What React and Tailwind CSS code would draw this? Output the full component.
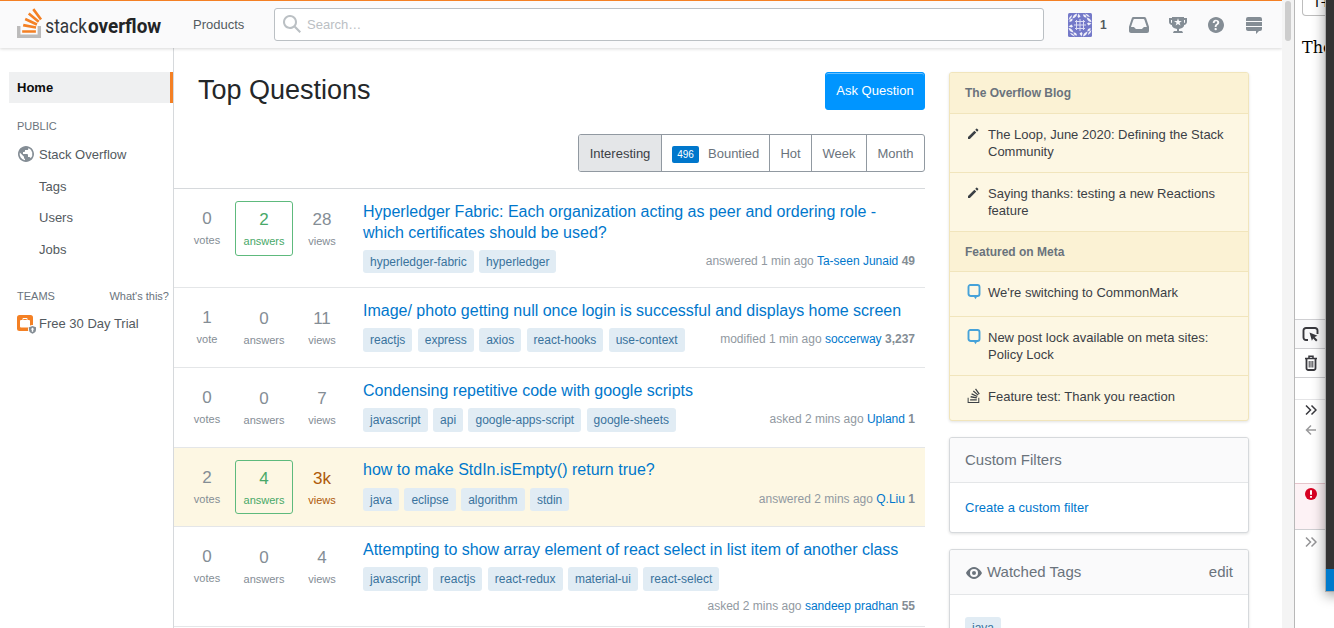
import React from 'react';

const questions = [
  {
    votes: '0', votesLabel: 'votes', answers: '2', accepted: true, views: '28',
    title: ['Hyperledger Fabric: Each organization acting as peer and ordering role -', 'which certificates should be used?'],
    tags: ['hyperledger-fabric', 'hyperledger'],
    action: 'answered 1 min ago', user: 'Ta-seen Junaid', rep: '49', height: 'h-[99px]', box: 'h-[55px]', tagHeight: 'h-[23px]',
  },
  {
    votes: '1', votesLabel: 'vote', answers: '0', views: '11',
    title: ['Image/ photo getting null once login is successful and displays home screen'],
    tags: ['reactjs', 'express', 'axios', 'react-hooks', 'use-context'],
    action: 'modified 1 min ago', user: 'soccerway', rep: '3,237', height: 'h-[80px]', box: 'h-[55px]', tagHeight: 'h-6',
  },
  {
    votes: '0', votesLabel: 'votes', answers: '0', views: '7',
    title: ['Condensing repetitive code with google scripts'],
    tags: ['javascript', 'api', 'google-apps-script', 'google-sheets'],
    action: 'asked 2 mins ago', user: 'Upland', rep: '1', height: 'h-[80px]', box: 'h-[55px]', tagHeight: 'h-6',
  },
  {
    votes: '2', votesLabel: 'votes', answers: '4', accepted: true, views: '3k', hot: true, highlight: true,
    title: ['how to make StdIn.isEmpty() return true?'],
    tags: ['java', 'eclipse', 'algorithm', 'stdin'],
    action: 'answered 2 mins ago', user: 'Q.Liu', rep: '1', height: 'h-[79px]', box: 'h-[54px]', tagHeight: 'h-[23px]',
  },
  {
    votes: '0', votesLabel: 'votes', answers: '0', views: '4', wrap: true,
    title: ['Attempting to show array element of react select in list item of another class'],
    tags: ['javascript', 'reactjs', 'react-redux', 'material-ui', 'react-select'],
    action: 'asked 2 mins ago', user: 'sandeep pradhan', rep: '55', height: 'h-[100px]', box: 'h-[55px]', tagHeight: 'h-6',
  },
];

function Icon({ w = 18, h = 18, className = '', d }) {
  return (
    <svg width={w} height={h} viewBox={`0 0 ${w} ${h}`} className={`shrink-0 ${className}`} fill="currentColor">
      <path d={d} />
    </svg>
  );
}

const GLYPH_BASE = 'M14 16v-5h2v7H2v-7h2v5h10z';
const GLYPH_BARS =
  'M12.09.72l-1.21.9 4.5 6.07 1.22-.9L12.09.71zM5 15h8v-1.5H5V15zm9.15-5.87L8.35 4.3l.96-1.16 5.8 4.83-.96 1.16zm-7.7-1.47l6.85 3.19.63-1.37-6.85-3.2-.63 1.38zm6.53 5L5.4 11.39l.38-1.67 7.42 1.48-.22 1.46z';

function Logo() {
  return (
    <svg width="152" height="37" viewBox="0 0 152 37" className="ml-[13px] shrink-0">
      <g transform="translate(.6 1.1) scale(1.714)">
        <path d={GLYPH_BASE} fill="#BCBBBB" />
        <path d={GLYPH_BARS} fill="#F48024" />
      </g>
      <text transform="translate(32.3 26.5) scale(.86 1)" fill="#33363a" className="font-[Roboto,sans-serif] text-[20px]">stack</text>
      <text transform="translate(75 26.5) scale(.945 1)" fill="#222426" className="font-[Roboto,sans-serif] text-[20px] font-bold">overflow</text>
    </svg>
  );
}

function Avatar() {
  const quarter = (
    <>
      <path d="M.5 7Q1 3.500 4 2Q4 5 .5 7Z" />
      <path d="M4.500 5.500Q5 1.500 9 .5Q9 4 4.500 5.500Z" />
      <path d="M10.500 .5L12.500 3.500L10.500 5L9.500 3.500Z" />
      <path d="M15 1.500Q18 1 18.500 4.500Q15.500 5 15 1.500Z" />
    </>
  );
  return (
    <svg width="24" height="24" viewBox="0 0 24 24" className="shrink-0">
      <rect width="24" height="24" rx="1.500" fill="#7479c9" />
      <g fill="#f1f1fa">
        <g>{quarter}</g>
        <g transform="rotate(90 12 12)">{quarter}</g>
        <g transform="rotate(180 12 12)">{quarter}</g>
        <g transform="rotate(270 12 12)">{quarter}</g>
      </g>
      <circle cx="12" cy="12" r="6.600" fill="#7479c9" />
      <path d="M7 8.500h10M6 12h12M7 15.500h10M8.500 7v10M12 6v12M15.500 7v10" stroke="#dcdcf3" strokeWidth="1" />
    </svg>
  );
}

function Header() {
  return (
    <header className="relative z-10 flex h-12 w-full shrink-0 items-center border-t border-[#f48024] bg-[#fafafb] shadow-[0_1px_3px_rgba(12,13,14,0.16)]">
      <Logo />
      <span className="ml-[28px] w-[81px] text-[13px] text-[#535a60]">Products</span>
      <div className="flex h-[33px] w-[770px] items-center rounded-[3px] border border-[#bbc0c4] bg-white pl-2">
        <Icon className="-mt-px text-[#bbc0c4]" d="M18 16.5l-5.14-5.18h-.35a7 7 0 10-1.19 1.19v.35L16.5 18l1.5-1.5zM12 7A5 5 0 112 7a5 5 0 0110 0z" />
        <span className="ml-[6px] text-[13px] text-[#bbc0c4]">Search…</span>
      </div>
      <div className="flex items-center pl-6 text-[#848d95]">
        <Avatar />
        <span className="ml-2 w-[29px] text-[12px] font-bold text-[#535a60]">1</span>
        <Icon w={20} className="mt-px" d="M15.19 1H4.63c-.85 0-1.6.54-1.85 1.35L0 10.79V15c0 1.1.9 2 2 2h16a2 2 0 002-2v-4.21l-2.87-8.44A2 2 0 0015.19 1zm-.28 10l-2 2h-6l-2-2H1.96L4.4 3.68A1 1 0 015.35 3h9.12a1 1 0 01.95.68L17.86 11h-2.95z" />
        <Icon className="ml-5 mt-px" d="M15 2V1H3v1H0v4c0 1.6 1.4 3 3 3v1c.4 1.5 3 2.6 5 3v2H5s-1 1.5-1 2h10c0-.4-1-2-1-2h-3v-2c2-.4 4.6-1.5 5-3V9c1.6-.2 3-1.4 3-3V2h-3zM3 7c-.5 0-1-.5-1-1V4h1v3zm8.4 2.5L9 8 6.6 9.4l1-2.7L5 5h3l1-2.7L10 5h2.8l-2.3 1.8 1 2.7h-.1zM16 6c0 .5-.5 1-1 1V4h1v2z" />
        <Icon className="ml-5 mt-px" d="M9 1C4.64 1 1 4.64 1 9c0 4.36 3.64 8 8 8 4.36 0 8-3.64 8-8 0-4.36-3.64-8-8-8zm.81 12.13c-.02.71-.55 1.15-1.24 1.13-.66-.02-1.17-.49-1.15-1.2.02-.72.56-1.18 1.22-1.16.7.03 1.2.51 1.17 1.23zM11.77 8c-.59.66-1.78 1.09-2.05 1.97a4 4 0 00-.09.75c0 .05-.03.16-.18.16H7.88c-.16 0-.18-.1-.18-.15.06-1.35.66-2.2 1.83-2.88.39-.29.7-.75.7-1.24.01-1.24-1.64-1.82-2.35-.72-.21.33-.18.73-.18 1.1H5.75c0-1.97 1.03-3.26 3.03-3.26 1.75 0 3.47.87 3.47 2.83 0 .57-.2 1.05-.48 1.44z" />
        <Icon className="ml-5 mt-px" d="M15 1H3a2 2 0 00-2 2v2h16V3a2 2 0 00-2-2zM1 13c0 1.1.9 2 2 2h8v3l3-3h1a2 2 0 002-2v-2H1v2zm16-7H1v4h16V6z" />
      </div>
    </header>
  );
}

function Sidebar() {
  return (
    <nav className="w-[174px] shrink-0 border-r border-[#d6d9dc] pl-[9px] pt-6 text-[13px] text-[#535a60]">
      <div className="flex h-[31px] items-center border-r-[3px] border-[#f48024] bg-[#eff0f1] pl-2 font-bold text-[#0c0d0e]">Home</div>
      <div className="pl-2">
        <div className="mt-[15px] h-4 text-[11px] leading-4 text-[#6a737c]">PUBLIC</div>
        <div className="mt-[11px] flex h-5 items-center">
          <Icon className="-mt-[2px] text-[#848d95]" d="M9 1C4.64 1 1 4.64 1 9c0 4.36 3.64 8 8 8 4.36 0 8-3.64 8-8 0-4.36-3.64-8-8-8zM8 15.32a6.46 6.46 0 01-4.3-2.74 6.46 6.46 0 01-.93-5.01L7 11.68v.8c0 .88.12 1.32 1 1.32v1.52zm5.72-2c-.2-.66-1-1.32-1.72-1.32h-1v-2c0-.44-.56-1-1-1H6V7h1c.44 0 1-.56 1-1V5h2c.88 0 1.4-.72 1.4-1.6v-.33a6.45 6.45 0 013.83 4.51 6.45 6.45 0 01-1.51 5.73v.01z" />
          <span className="ml-1">Stack Overflow</span>
        </div>
        <div className="mt-3 h-5 pl-[22px] leading-5">Tags</div>
        <div className="mt-[11px] h-5 pl-[22px] leading-5">Users</div>
        <div className="mt-3 h-5 pl-[22px] leading-5">Jobs</div>
        <div className="mt-[28px] flex h-4 justify-between pr-1 text-[11px] leading-4 text-[#6a737c]">
          <span>TEAMS</span>
          <span>What's this?</span>
        </div>
        <div className="mt-[10px] flex h-5 items-center">
          <svg width="20" height="20" viewBox="0 0 20 20" className="shrink-0">
            <rect x="0" y="1" width="16" height="16" rx="2.5" fill="#F48024" />
            <path d="M3 7a1 1 0 011-1h1.5V5a1 1 0 011-1h3a1 1 0 011 1v1H12a1 1 0 011 1v5.5a1 1 0 01-1 1H4a1 1 0 01-1-1z" fill="#fff" />
            <path d="M6.3 5h3.4v1H6.3z" fill="#F48024" />
            <circle cx="15.5" cy="15.5" r="4.5" fill="#fff" />
            <path d="M12 13.2l3.5-1.2 3.5 1.2v2.600c0 2.200-1.500 3.200-3.500 4-2-.8-3.500-1.800-3.500-4z" fill="#848d95" />
            <path d="M15.500 13.500l1.800 2h-1.100v2.300h-1.400v-2.300h-1.100z" fill="#fff" />
          </svg>
          <span className="ml-[2px]">Free 30 Day Trial</span>
        </div>
      </div>
    </nav>
  );
}

function Tag({ children, height = 'h-6' }) {
  return <span className={`rounded-[3px] bg-[#e1ecf4] px-[7px] text-[12px] leading-6 text-[#39739d] ${height}`}>{children}</span>;
}

function Stat({ value, label, className }) {
  return (
    <div className={`flex shrink-0 flex-col items-center ${className}`}>
      <span className="text-[17px] leading-5">{value}</span>
      <span className="mt-1 text-[11px] leading-[14px]">{label}</span>
    </div>
  );
}

function Question({ q }) {
  const meta = (
    <div className={`ml-auto shrink-0 text-[12px] leading-[15px] text-[#9199a1] ${q.wrap ? 'mt-2' : 'mt-1'}`}>
      {q.action} <span className="text-[#0077cc]">{q.user}</span> <b className="text-[#848d95]">{q.rep}</b>
    </div>
  );
  return (
    <div className={`flex shrink-0 border-b border-[#e4e6e8] pt-3 pr-[10px] text-[#848d95] ${q.height} ${q.highlight ? 'bg-[#fdf7e3]' : ''}`}>
      <Stat value={q.votes} label={q.votesLabel} className="ml-[14px] w-[38px] pt-2" />
      <Stat
        value={q.answers}
        label="answers"
        className={`ml-[9px] w-[58px] rounded-[3px] border pt-2 ${q.box} ${q.accepted ? 'border-[#5eba7d] text-[#48a868]' : 'border-transparent'}`}
      />
      <Stat value={q.views} label="views" className={`ml-[10px] w-[38px] pt-[9px] ${q.hot ? 'text-[#ae5a0a]' : ''}`} />
      <div className={`ml-[22px] min-w-0 flex-1 ${q.highlight ? '-mt-px' : ''}`}>
        <h3 className="text-[16px] leading-[21px] text-[#0077cc]">
          {q.title.map((line) => (
            <div key={line} className="whitespace-nowrap">{line}</div>
          ))}
        </h3>
        <div className={`flex gap-[5.4px] ${q.highlight ? 'mt-2' : 'mt-[7px]'} ${q.wrap ? 'flex-wrap gap-y-0' : ''}`}>
          {q.tags.map((t) => (
            <Tag key={t} height={q.tagHeight}>{t}</Tag>
          ))}
          {q.wrap ? <div className="flex w-full">{meta}</div> : meta}
        </div>
      </div>
    </div>
  );
}

function Main() {
  return (
    <main className="flex w-[751px] shrink-0 flex-col">
      <div className="flex h-[86px] shrink-0 justify-between pl-6 pt-6">
        <h1 className="pt-px text-[27px] leading-[35px] text-[#242729]">Top Questions</h1>
        <button className="h-[38px] w-[100px] rounded-[3px] border border-[#0095ff] bg-[#0095ff] text-[13px] text-white shadow-[inset_0_1px_0_rgba(255,255,255,0.4)]">Ask Question</button>
      </div>
      <div className="flex h-[55px] shrink-0 justify-end border-b border-[#d6d9dc] text-[13px] text-[#6a737c]">
        <div className="flex h-[38px] divide-x divide-[#9199a1] overflow-hidden rounded-[3px] border border-[#9199a1]">
          <span className="flex w-[83px] items-center justify-center bg-[#e4e6e8] pt-[2px] text-[#3b4045]">Interesting</span>
          <span className="flex w-[108px] items-center pl-[10px] pt-[2px]">
            <span className="mt-px mr-[9px] flex h-[17px] w-[27px] items-center justify-center rounded-[2px] bg-[#0077cc] text-[10px] text-white">496</span>
            Bountied
          </span>
          <span className="flex w-[42px] items-center justify-center pt-[2px]">Hot</span>
          <span className="flex w-[55px] items-center justify-center pt-[2px]">Week</span>
          <span className="flex w-[57px] items-center justify-center pt-[2px]">Month</span>
        </div>
      </div>
      {questions.map((q) => (
        <Question key={q.title[0]} q={q} />
      ))}
    </main>
  );
}

function Pencil() {
  return <Icon w={14} h={14} className="-ml-px mt-px text-[#3b4045]" d="M11.1 1.71l1.13 1.12c.2.2.2.51 0 .71L11.1 4.7 9.21 2.86l1.17-1.15c.2-.2.51-.2.71 0h.01zM2 10.12l6.37-6.43 1.88 1.88L3.88 12H2v-1.88z" />;
}

function Bubble() {
  return (
    <svg width="14" height="16" viewBox="0 0 14 16" className="shrink-0">
      <path d="M4 1h6.500a2 2 0 012 2v7a2 2 0 01-2 2H4a2.500 2.500 0 01-2.500-2V3a2 2 0 012.500-2z" fill="none" stroke="#46A2D9" strokeWidth="1.900" />
      <path d="M6.500 12h4L8.500 15.300z" fill="#46A2D9" />
    </svg>
  );
}

function Glyph() {
  return (
    <svg width="15" height="15" viewBox="1.500 0 17.500 18" className="shrink-0" fill="#3b4045">
      <path d="M14.800 16.800v-5h1.200v6.200H2v-6.200h1.200v5z" />
      <path d={GLYPH_BARS} />
    </svg>
  );
}

function BlogItem({ icon, children, className }) {
  return (
    <div className={`flex shrink-0 border-b border-[#f1e5bc] pl-[17px] pt-3 text-[13px] leading-[17px] text-[#3b4045] last:border-b-0 ${className}`}>
      <span className="w-[21px] shrink-0">{icon}</span>
      <span className="w-[250px]">{children}</span>
    </div>
  );
}

function Aside() {
  return (
    <aside className="ml-6 flex w-[300px] shrink-0 flex-col gap-4 pt-6">
      <section className="flex h-[349px] shrink-0 flex-col overflow-hidden rounded-[3px] border border-[#f1e5bc] bg-[#fdf7e3] shadow-[0_1px_3px_rgba(12,13,14,0.12)]">
        <div className="flex h-[41px] shrink-0 items-center border-b border-[#f1e5bc] bg-[#fbf2d4] pl-[15px] text-[12px] font-bold text-[#6a737c]">The Overflow Blog</div>
        <BlogItem icon={<Pencil />} className="h-[59px]">The Loop, June 2020: Defining the Stack Community</BlogItem>
        <BlogItem icon={<Pencil />} className="h-[59px]">Saying thanks: testing a new Reactions feature</BlogItem>
        <div className="flex h-10 shrink-0 items-center border-b border-[#f1e5bc] bg-[#fbf2d4] pl-[15px] text-[12px] font-bold text-[#6a737c]">Featured on Meta</div>
        <BlogItem icon={<Bubble />} className="h-[45px]">We're switching to CommonMark</BlogItem>
        <BlogItem icon={<Bubble />} className="h-[59px]">New post lock available on meta sites: Policy Lock</BlogItem>
        <BlogItem icon={<Glyph />} className="h-[44px]">Feature test: Thank you reaction</BlogItem>
      </section>
      <section className="h-[96px] shrink-0 overflow-hidden rounded-[3px] border border-[#d6d9dc] bg-white shadow-[0_1px_3px_rgba(12,13,14,0.12)]">
        <div className="flex h-[45px] items-center border-b border-[#e4e6e8] bg-[#fafafb] pl-[15px] text-[15px] text-[#6a737c]">Custom Filters</div>
        <div className="flex h-[49px] items-center pl-[15px] text-[13px] text-[#0077cc]">Create a custom filter</div>
      </section>
      <section className="h-[140px] shrink-0 overflow-hidden rounded-[3px] border border-[#d6d9dc] bg-white shadow-[0_1px_3px_rgba(12,13,14,0.12)]">
        <div className="flex h-[45px] items-center border-b border-[#e4e6e8] bg-[#fafafb] px-[15px] text-[15px] text-[#6a737c]">
          <Icon className="mt-[2px]" d="M9.06 3C4 3 1 9 1 9s3 6 8.060 6C14 15 17 9 17 9s-3-6-7.940-6zM9 13a4 4 0 110-8 4 4 0 010 8zm0-2a2 2 0 002-2 2 2 0 00-2-2 2 2 0 00-2 2 2 2 0 002 2z" />
          <span className="ml-1 flex-1">Watched Tags</span>
          <span>edit</span>
        </div>
        <div className="flex pl-[15px] pt-[22px]">
          <span className="h-6 rounded-[3px] bg-[#e1ecf4] px-[7px] text-[12px] leading-[22px] text-[#39739d]">java</span>
        </div>
      </section>
    </aside>
  );
}

function Chevrons({ className }) {
  return (
    <svg width="12" height="12" viewBox="0 0 12 12" className={className} fill="none" stroke="currentColor" strokeWidth="1.5">
      <path d="M1 1.500L5.500 6L1 10.500M6.500 1.500L11 6L6.500 10.500" />
    </svg>
  );
}

function ToolPane() {
  return (
    <div className="relative flex w-[40px] shrink-0 flex-col overflow-hidden border-l border-[#b8b8b8] bg-white">
      <div className="flex h-4 w-[60px] shrink-0 pl-[7px]">
        <div className="h-4 w-[50px] overflow-hidden rounded-b-[4px] border border-t-0 border-[#bdbdbd] pl-[10px] font-['DejaVu_Sans',sans-serif] text-[13px] leading-[5px] tracking-[-1px] text-black">T+</div>
      </div>
      <div className="h-[303px] shrink-0 pl-[7px] pt-[22px] font-['DejaVu_Serif',serif] text-[16px] leading-5 text-black">The</div>
      <div className="flex h-[29px] w-[31px] shrink-0 items-center justify-center border-t border-[#cfcfd2] bg-[#f9f9fa] text-[#38383d]">
        <svg width="17" height="16" viewBox="0 0 17 16" fill="none">
          <path d="M6 14H4a2.500 2.500 0 01-2.500-2.500v-7A2.500 2.500 0 014 2h9a2.500 2.500 0 012.500 2.500V8" stroke="currentColor" strokeWidth="1.900" />
          <path d="M7.500 6.500l8 3.300-2.900 1.200 2.900 3-1.400 1.400-3-3-1.200 2.400z" fill="currentColor" />
        </svg>
      </div>
      <div className="flex h-[29px] w-[31px] shrink-0 items-center justify-center border-t border-[#cfcfd2] text-[#38383d]">
        <svg width="14" height="16" viewBox="0 0 14 16" fill="none" stroke="currentColor">
          <path d="M1 3.500h12M5 3V1.200h4V3" strokeWidth="1.500" />
          <path d="M2.500 4v9A1.800 1.800 0 004.300 15h5.400a1.800 1.800 0 001.800-2V4" strokeWidth="1.800" />
          <path d="M5.200 6v6.500M7 6v6.500M8.800 6v6.500" />
        </svg>
      </div>
      <div className="h-[22px] shrink-0 border-t border-[#cfcfd2]" />
      <div className="flex h-[84px] w-[31px] shrink-0 flex-col items-center border-t border-[#e4e4e6] pt-1">
        <Chevrons className="text-[#38383d]" />
        <svg width="12" height="12" viewBox="0 0 12 12" className="mt-2 text-[#9a9a9c]" fill="none" stroke="currentColor" strokeWidth="1.500">
          <path d="M11 6H1.500M6 1.500L1.500 6L6 10.500" />
        </svg>
      </div>
      <div className="flex h-[46px] w-[31px] shrink-0 justify-center border-t border-[#e6c5cc] bg-[#fdf2f5] pt-1">
        <svg width="12" height="12" viewBox="0 0 12 12" className="ml-px">
          <circle cx="6" cy="6" r="6" fill="#d70022" />
          <path d="M5 2.300h2v4.500H5zM5 7.900h2v1.900H5z" fill="#fff" />
        </svg>
      </div>
      <div className="flex w-[31px] flex-1 justify-center border-t border-[#cfcfd2] pt-[6px]">
        <Chevrons className="text-[#949496]" />
      </div>
      {/* Neighbouring window overlapping the pane */}
      <div className="absolute left-[30px] top-[-10px] flex h-[602px] w-5 flex-col border-b border-l border-[#a9a9a9] bg-[#333333] shadow-[0_3px_13px_rgba(0,0,0,0.4)]">
        <div className="flex-1" />
        <div className="h-[22px] bg-[#007acc]" />
      </div>
    </div>
  );
}

export default function App() {
  return (
    <div className="flex h-[628px] w-[1334px] overflow-hidden bg-white font-['Liberation_Sans',Arial,sans-serif]">
      <div className="flex w-[1282px] shrink-0 flex-col overflow-hidden">
        <Header />
        <div className="flex h-[580px]">
          <Sidebar />
          <Main />
          <Aside />
        </div>
      </div>
      <div className="w-3 shrink-0 bg-[#f4f4f4] pl-[3px] pt-px">
        <div className="h-10 w-[6px] rounded-full bg-[#cdcdcd]" />
      </div>
      <ToolPane />
    </div>
  );
}
